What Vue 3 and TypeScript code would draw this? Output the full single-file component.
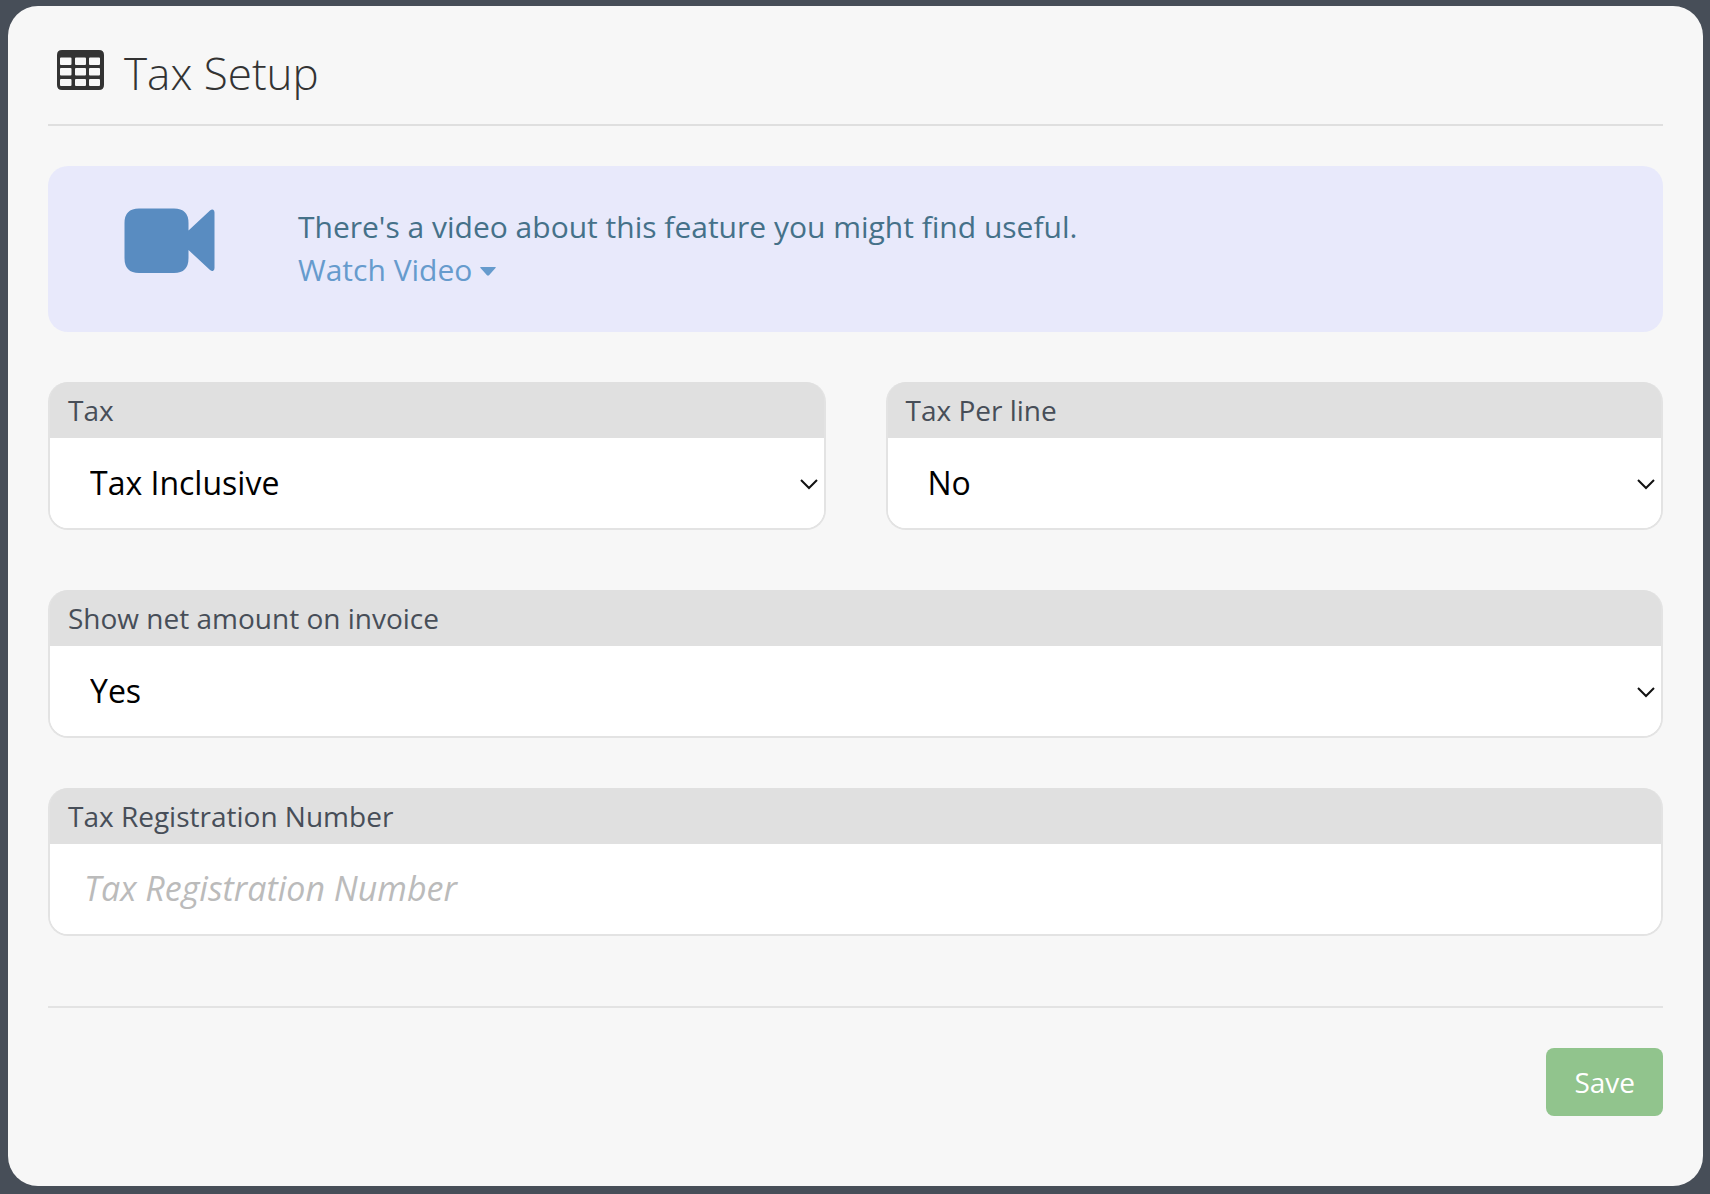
<script setup lang="ts">
import { ref } from 'vue'

interface SelectField {
  id: string
  label: string
  options: string[]
  wide: boolean
}

const fields: SelectField[] = [
  { id: 'tax', label: 'Tax', options: ['Tax Inclusive', 'Tax Exclusive', 'No Tax'], wide: false },
  { id: 'tax-per-line', label: 'Tax Per line', options: ['No', 'Yes'], wide: false },
  { id: 'show-net', label: 'Show net amount on invoice', options: ['Yes', 'No'], wide: true },
]

const values = ref<Record<string, string>>({
  tax: 'Tax Inclusive',
  'tax-per-line': 'No',
  'show-net': 'Yes',
})
const registration = ref('')
</script>

<template>
  <main class="page">
    <form class="card" @submit.prevent>
      <header class="head">
        <svg class="head-icon" viewBox="0 0 47 40" aria-hidden="true">
          <path
            fill="currentColor"
            fill-rule="evenodd"
            d="M5 0H42Q47 0 47 5V35Q47 40 42 40H5Q0 40 0 35V5Q0 0 5 0Z
            M4 7.5H13.5Q14.5 7.5 14.5 8.5V14Q14.5 15 13.5 15H4Q3 15 3 14V8.5Q3 7.5 4 7.5Z
            M19 7.5H28Q29 7.5 29 8.5V14Q29 15 28 15H19Q18 15 18 14V8.5Q18 7.5 19 7.5Z
            M33 7.5H42Q43 7.5 43 8.5V14Q43 15 42 15H33Q32 15 32 14V8.5Q32 7.5 33 7.5Z
            M4 18H13.5Q14.5 18 14.5 19V24.5Q14.5 25.5 13.5 25.5H4Q3 25.5 3 24.5V19Q3 18 4 18Z
            M19 18H28Q29 18 29 19V24.5Q29 25.5 28 25.5H19Q18 25.5 18 24.5V19Q18 18 19 18Z
            M33 18H42Q43 18 43 19V24.5Q43 25.5 42 25.5H33Q32 25.5 32 24.5V19Q32 18 33 18Z
            M4 29H13.5Q14.5 29 14.5 30V35Q14.5 36 13.5 36H4Q3 36 3 35V30Q3 29 4 29Z
            M19 29H28Q29 29 29 30V35Q29 36 28 36H19Q18 36 18 35V30Q18 29 19 29Z
            M33 29H42Q43 29 43 30V35Q43 36 42 36H33Q32 36 32 35V30Q32 29 33 29Z"
          />
        </svg>
        <h1 class="title">Tax Setup</h1>
      </header>

      <section class="banner">
        <svg class="banner-icon" viewBox="0 0 91 65" aria-hidden="true">
          <path
            fill="currentColor"
            d="M15 0.5H50Q64.5 0.5 64.5 15V22.5L86 2.5Q88 1 89.2 1.8Q90.5 2.5 90.5 4.5V60Q90.5 62 89.2 62.8Q88 63.5 86 62L64.5 42V50Q64.5 65 50 65H15Q0.5 65 0.5 50V15Q0.5 0.5 15 0.5Z"
          />
        </svg>
        <div class="banner-text">
          <p class="banner-line">There's a video about this feature you might find useful.</p>
          <a class="watch" href="#video">
            Watch Video
            <svg class="caret" viewBox="0 0 16 9" aria-hidden="true">
              <path fill="currentColor" d="M1 0H15Q16.5 0 15.5 1L9 8.3Q8 9.2 7 8.3L0.5 1Q-0.5 0 1 0Z" />
            </svg>
          </a>
        </div>
      </section>

      <div class="fields">
        <div v-for="field in fields" :key="field.id" class="field" :class="{ wide: field.wide }">
          <label class="label" :for="field.id">{{ field.label }}</label>
          <div class="control">
            <select :id="field.id" v-model="values[field.id]" class="input select">
              <option v-for="option in field.options" :key="option">{{ option }}</option>
            </select>
            <svg class="chevron" viewBox="0 0 18 11" aria-hidden="true">
              <path d="M1 1L9 9L17 1" fill="none" stroke="currentColor" stroke-width="2" />
            </svg>
          </div>
        </div>
      </div>

      <div class="field registration">
        <label class="label" for="registration">Tax Registration Number</label>
        <input
          id="registration"
          v-model="registration"
          class="input text"
          type="text"
          placeholder="Tax Registration Number"
        />
      </div>

      <footer class="foot">
        <button class="save" type="submit">Save</button>
      </footer>
    </form>
  </main>
</template>

<style>
body {
  margin: 0;
  background: #474e58;
}
</style>

<style scoped>
.page {
  box-sizing: border-box;
  min-height: 100vh;
  padding: 6px 7px 8px 8px;
  background: #474e58;
  font-family: 'Open Sans', 'Noto Sans', sans-serif;
}

.card {
  padding: 0 40px 70px;
  border-radius: 30px;
  background: #f7f7f7;
}

.head {
  display: flex;
  align-items: center;
  gap: 20px;
  box-sizing: border-box;
  height: 120px;
  padding: 16px 9px 0;
  border-bottom: 2px solid #dfdfdf;
  color: #333;
}

.head-icon {
  width: 47px;
  height: 40px;
  margin-bottom: 6px;
}

.title {
  margin: 0;
  font-size: 44px;
  font-weight: 300;
  line-height: 60px;
}

.banner {
  display: flex;
  align-items: flex-start;
  gap: 83px;
  margin-top: 40px;
  padding: 39px 76px 41px;
  border-radius: 20px;
  background: #e8e9fb;
}

.banner-icon {
  flex: none;
  width: 91px;
  height: 65px;
  margin-top: 3px;
  color: #598cc1;
}

.banner-text {
  font-size: 30px;
  line-height: 43px;
}

.banner-line {
  margin: 0;
  color: #457189;
}

.watch {
  display: inline-flex;
  align-items: center;
  gap: 8px;
  color: #669bcd;
  text-decoration: none;
}

.caret {
  width: 16px;
  height: 9px;
  margin-top: 4px;
}

.fields {
  display: grid;
  grid-template-columns: 1fr 1fr;
  gap: 60px;
  margin-top: 50px;
}

.field {
  overflow: hidden;
  border: 2px solid #e3e3e3;
  border-top: 0;
  border-radius: 20px;
  background: linear-gradient(#e0e0e0, #e0e0e0) border-box top / 100% 56px no-repeat, #fff;
}

.wide {
  grid-column: 1 / -1;
}

.registration {
  margin-top: 50px;
}

.label {
  display: block;
  margin: 0 -2px;
  padding: 0 20px;
  background: #e0e0e0;
  color: #474e58;
  font-size: 28px;
  line-height: 56px;
}

.control {
  position: relative;
}

.input {
  display: block;
  box-sizing: border-box;
  width: 100%;
  height: 90px;
  margin: 0;
  border: 0;
  outline: 0;
  background: #fff;
  color: #000;
  font-family: inherit;
  font-size: 32px;
}

.select {
  appearance: none;
  padding: 0 40px 2px;
}

.text {
  padding: 0 34px 2px;
}

.text::placeholder {
  color: #bbb;
  font-size: 34px;
  font-style: italic;
  opacity: 1;
}

.chevron {
  position: absolute;
  top: 41px;
  right: 6px;
  width: 18px;
  height: 11px;
  color: #111;
  pointer-events: none;
}

.foot {
  display: flex;
  justify-content: flex-end;
  margin-top: 70px;
  padding-top: 40px;
  border-top: 2px solid #e3e3e3;
}

.save {
  height: 68px;
  padding: 0 28px;
  border: 0;
  border-radius: 8px;
  background: #91c48d;
  color: #fff;
  font-family: inherit;
  font-size: 28px;
}
</style>
